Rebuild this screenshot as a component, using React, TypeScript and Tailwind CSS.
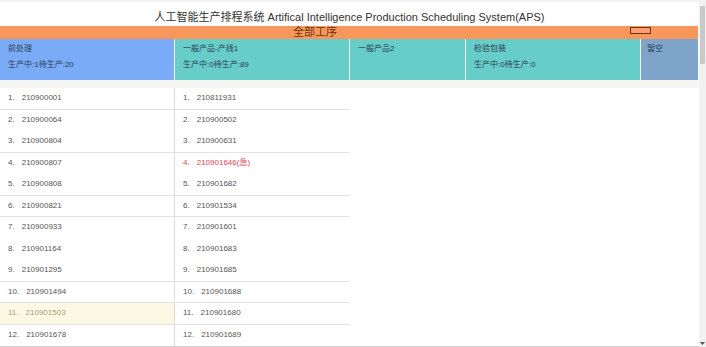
import React from "react";

const col1 = [
  "210900001","210900064","210900804","210900807","210900808","210900821",
  "210900933","210901164","210901295","210901494","210901503","210901678",
];
const col2 = [
  "210811931","210900502","210900631","210901646(急)","210901682","210901534",
  "210901601","210901683","210901685","210901688","210901680","210901689",
];
const bordered = [1, 3, 5, 6, 9, 10, 11];

function Row({ n, v, kind }: { n: number; v: string; kind?: "hl" | "red" }) {
  const b = bordered.includes(n) ? "border-b border-[#e2e2e2]" : "border-b border-transparent";
  const bg = kind === "hl" ? "bg-[#fbf8e4]" : "";
  const color = kind === "red" ? "text-[#e8424f]" : kind === "hl" ? "text-[#a89f7c]" : "text-[#555]";
  return (
    <div className={`box-border h-[21.5px] flex items-center pl-[8px] text-[8px] ${b} ${bg} ${color}`}>
      <span className="mr-[7px]">{n}.</span>
      <span>{v}</span>
    </div>
  );
}

export default function App() {
  return (
    <div className="w-[706px] h-[347px] overflow-hidden flex bg-white font-['Liberation_Sans','Noto_Sans_CJK_SC',sans-serif]">
      <div className="w-[699px] flex flex-col">
        <div className="h-[26px] pt-[6px] flex items-center justify-center text-[11px] text-[#333] border-t-2 border-[#f2f2f2] box-border">
          人工智能生产排程系统 Artifical Intelligence Production Scheduling System(APS)
        </div>
        <div className="h-[13px] bg-[#f8975c] flex w-[698px]">
          <div className="w-[630px] text-center text-[11px] leading-[13px] text-[#6b3410]">全部工序</div>
          <div className="w-[21px] h-[7px] mt-[1px] border border-[#6e3210] bg-[#f9a070] box-border" />
        </div>
        <div className="h-[41px] flex w-[698px] text-[8px] leading-[16px] text-[#2c3e50]">
          <div className="w-[174px] bg-[#7aabf6] pt-[2px] px-[8px]">
            <div>前处理</div>
            <div>生产中:1待生产:20</div>
          </div>
          <div className="w-[1px] bg-white" />
          <div className="w-[174px] bg-[#67cdc8] pt-[2px] px-[8px]">
            <div>一般产品-产线1</div>
            <div>生产中:0待生产:89</div>
          </div>
          <div className="w-[1px] bg-white" />
          <div className="w-[115px] bg-[#67cdc8] pt-[2px] px-[8px]">
            <div>一般产品2</div>
          </div>
          <div className="w-[1px] bg-white" />
          <div className="w-[174px] bg-[#67cdc8] pt-[2px] px-[8px]">
            <div>检验包装</div>
            <div>生产中:0待生产:0</div>
          </div>
          <div className="w-[1px] bg-white" />
          <div className="w-[57px] bg-[#7ea4ca] pt-[2px] px-[6px]">
            <div>暂空</div>
          </div>
        </div>
        <div className="h-[8px] bg-[#f5f5f3]" />
        <div className="flex h-[258px]">
          <div className="w-[175px] border-r border-[#dcdcdc] box-border">
            {col1.map((v, i) => (
              <Row key={v} n={i + 1} v={v} kind={i === 10 ? "hl" : undefined} />
            ))}
          </div>
          <div className="w-[175px]">
            {col2.map((v, i) => (
              <Row key={v} n={i + 1} v={v} kind={i === 3 ? "red" : undefined} />
            ))}
          </div>
        </div>
        <div className="h-[1px] bg-[#cfcfcf]" />
      </div>
      <div className="w-[7px] bg-[#f1f1f1] flex flex-col pt-[6px]">
        <div className="h-[58px] mx-[1px] bg-[#c9c9c9] rounded-[1px]" />
        <div className="flex-1" />
        <div className="h-[8px] flex items-center justify-center">
          <svg width="5" height="3" viewBox="0 0 5 3"><path d="M0 0 L5 0 L2.5 3 Z" fill="#555" /></svg>
        </div>
      </div>
    </div>
  );
}
